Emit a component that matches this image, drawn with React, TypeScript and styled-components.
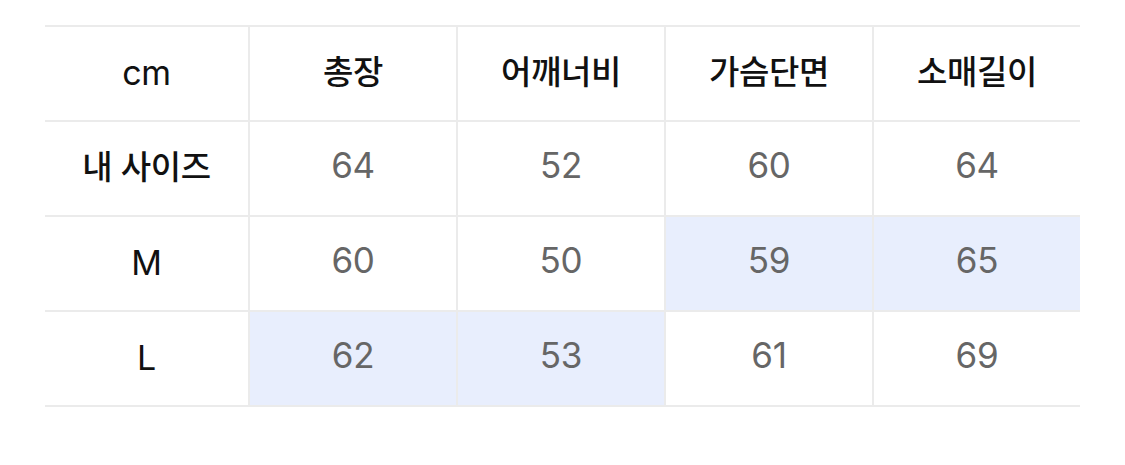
import styled, { createGlobalStyle } from "styled-components";

const GlobalStyle = createGlobalStyle`
  body {
    margin: 0;
    background: #ffffff;
    font-family: Inter, "Noto Sans CJK KR", sans-serif;
  }
`;

const Page = styled.div`
  padding: 25px 0 0 45px;
`;

const Table = styled.div`
  display: grid;
  grid-template-columns: 203px repeat(4, 206px);
  grid-auto-rows: 93px;
  gap: 2px;
  padding: 2px 0;
  width: 1035px;
  background: #ebebeb;
`;

const Cell = styled.div<{ $hit?: boolean }>`
  display: flex;
  align-items: center;
  justify-content: center;
  padding-bottom: 7px;
  box-sizing: border-box;
  background: ${(p) => (p.$hit ? "#e8eefd" : "#ffffff")};
  color: #666666;
  font-family: Inter, "Noto Sans CJK KR", sans-serif;
  font-size: 35px;
  letter-spacing: -0.3px;
`;

const HeadCell = styled(Cell)<{ $korean?: boolean }>`
  color: #111111;
  font-size: ${(p) => (p.$korean ? "33px" : "34px")};
  font-weight: ${(p) => (p.$korean ? 500 : 400)};
  padding-bottom: ${(p) => (p.$korean ? "7px" : "3px")};
`;

const headers = ["cm", "총장", "어깨너비", "가슴단면", "소매길이"];

interface SizeRow {
  label: string;
  values: number[];
  hits: boolean[];
}

const rows: SizeRow[] = [
  { label: "내 사이즈", values: [64, 52, 60, 64], hits: [false, false, false, false] },
  { label: "M", values: [60, 50, 59, 65], hits: [false, false, true, true] },
  { label: "L", values: [62, 53, 61, 69], hits: [true, true, false, false] },
];

const isKorean = (s: string) => /[가-힣]/.test(s);

function App() {
  return (
    <Page>
      <GlobalStyle />
      <Table>
        {headers.map((h) => (
          <HeadCell key={h} $korean={isKorean(h)}>
            {h}
          </HeadCell>
        ))}
        {rows.map((row) => [
          <HeadCell key={row.label} $korean={isKorean(row.label)}>
            {row.label}
          </HeadCell>,
          ...row.values.map((v, i) => (
            <Cell key={`${row.label}-${i}`} $hit={row.hits[i]}>
              {v}
            </Cell>
          )),
        ])}
      </Table>
    </Page>
  );
}

export default App;
